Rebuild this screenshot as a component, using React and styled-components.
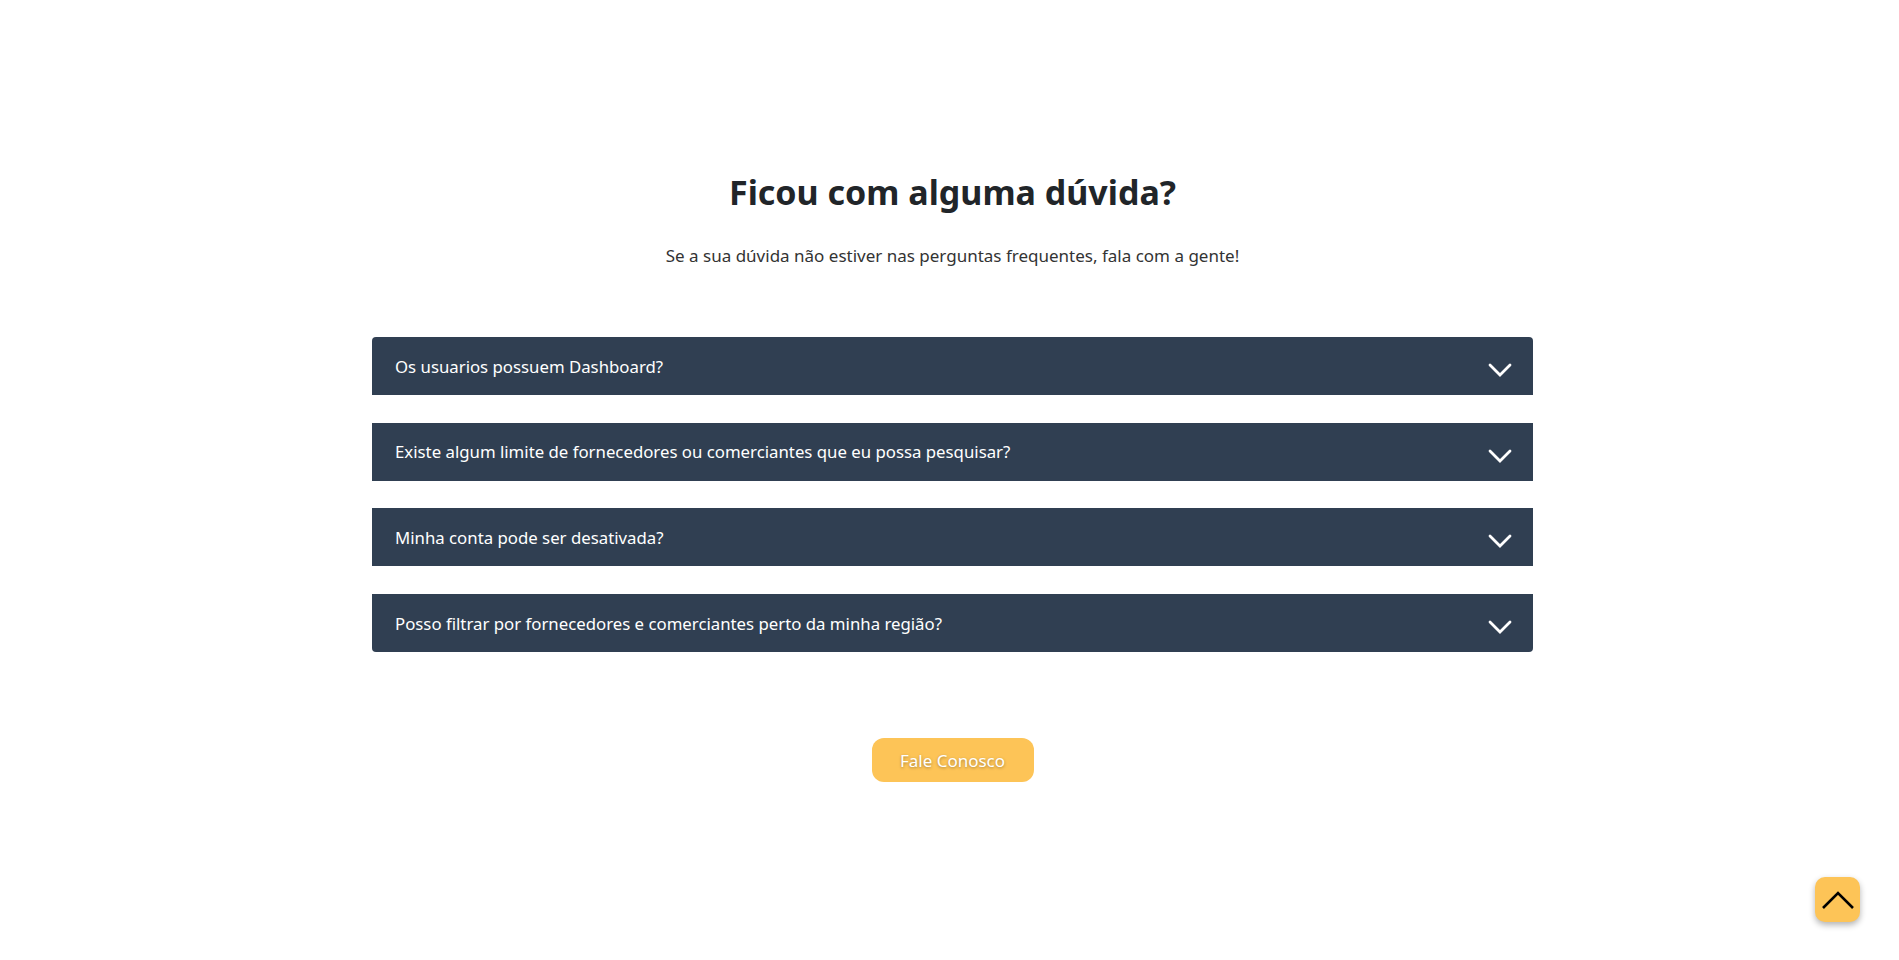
import { useState } from "react";
import styled, { createGlobalStyle } from "styled-components";

const GlobalStyle = createGlobalStyle`
  body {
    margin: 0;
    background: #fff;
    font-family: "Noto Sans", "Open Sans", sans-serif;
    color: #212529;
  }
`;

const Section = styled.section`
  display: flex;
  flex-direction: column;
  align-items: center;
  padding: 171px 0 0 6px;
  min-height: 960px;
  box-sizing: border-box;
`;

const Title = styled.h2`
  margin: 0;
  font-size: 34px;
  line-height: 42px;
  font-weight: 700;
  color: #212529;
`;

const Subtitle = styled.p`
  margin: 31px 0 0;
  font-size: 17px;
  line-height: 24px;
  color: #333;
`;

const Accordion = styled.div`
  width: 1161px;
  margin-top: 69px;
  display: flex;
  flex-direction: column;
  gap: 27.7px;
`;

const Item = styled.div`
  background: #303f52;
  border-radius: ${(p) => (p.$first ? "4px 4px 0 0" : p.$last ? "0 0 4px 4px" : "0")};
  overflow: hidden;
`;

const Header = styled.button`
  display: flex;
  align-items: center;
  justify-content: space-between;
  width: 100%;
  height: 58px;
  padding: 0 21px 0 23px;
  border: none;
  background: transparent;
  color: #fff;
  font-family: inherit;
  font-size: 16.8px;
  text-align: left;
  cursor: pointer;
`;

const Chevron = styled.svg`
  width: 24px;
  height: 14px;
  margin-top: 8px;
  transform: ${(p) => (p.$open ? "rotate(180deg)" : "none")};
`;

const Body = styled.div`
  padding: 0 23px 18px;
  color: #dfe5ec;
  font-size: 15px;
`;

const ContactButton = styled.button`
  margin-top: 86px;
  width: 162px;
  height: 44px;
  border: none;
  border-radius: 12px;
  background: #fdc457;
  color: #fff;
  font-family: inherit;
  font-size: 17px;
  text-shadow: 0 1px 3px rgba(0, 0, 0, 0.35);
  cursor: pointer;
`;

const BackToTop = styled.button`
  position: fixed;
  right: 39px;
  bottom: 38px;
  width: 45px;
  height: 45px;
  border: none;
  border-radius: 10px;
  background: #fdc457;
  box-shadow: 0 3px 6px rgba(0, 0, 0, 0.3);
  display: flex;
  align-items: center;
  justify-content: center;
  cursor: pointer;
  padding: 0;
`;

const questions = [
  {
    q: "Os usuarios possuem Dashboard?",
    a: "Sim, cada usuário tem acesso a um painel com as suas informações.",
  },
  {
    q: "Existe algum limite de fornecedores ou comerciantes que eu possa pesquisar?",
    a: "Não, você pode pesquisar quantos quiser.",
  },
  {
    q: "Minha conta pode ser desativada?",
    a: "Sim, você pode desativar a sua conta a qualquer momento.",
  },
  {
    q: "Posso filtrar por fornecedores e comerciantes perto da minha região?",
    a: "Sim, basta usar o filtro de localização.",
  },
];

const App = () => {
  const [open, setOpen] = useState(null);

  return (
    <>
      <GlobalStyle />
      <Section>
        <Title>Ficou com alguma dúvida?</Title>
        <Subtitle>
          Se a sua dúvida não estiver nas perguntas frequentes, fala com a gente!
        </Subtitle>
        <Accordion>
          {questions.map((item, i) => (
            <Item key={item.q} $first={i === 0} $last={i === questions.length - 1}>
              <Header onClick={() => setOpen(open === i ? null : i)}>
                {item.q}
                <Chevron viewBox="0 0 24 14" $open={open === i}>
                  <path
                    d="M2 2l10 10L22 2"
                    fill="none"
                    stroke="#fff"
                    strokeWidth="2.8"
                    strokeLinecap="round"
                    strokeLinejoin="miter"
                  />
                </Chevron>
              </Header>
              {open === i && <Body>{item.a}</Body>}
            </Item>
          ))}
        </Accordion>
        <ContactButton>Fale Conosco</ContactButton>
      </Section>
      <BackToTop onClick={() => window.scrollTo(0, 0)}>
        <svg width="34" height="20" viewBox="0 0 34 20">
          <path d="M2 18L17 3l15 15" fill="none" stroke="#000" strokeWidth="2.6" />
        </svg>
      </BackToTop>
    </>
  );
};

export default App;
